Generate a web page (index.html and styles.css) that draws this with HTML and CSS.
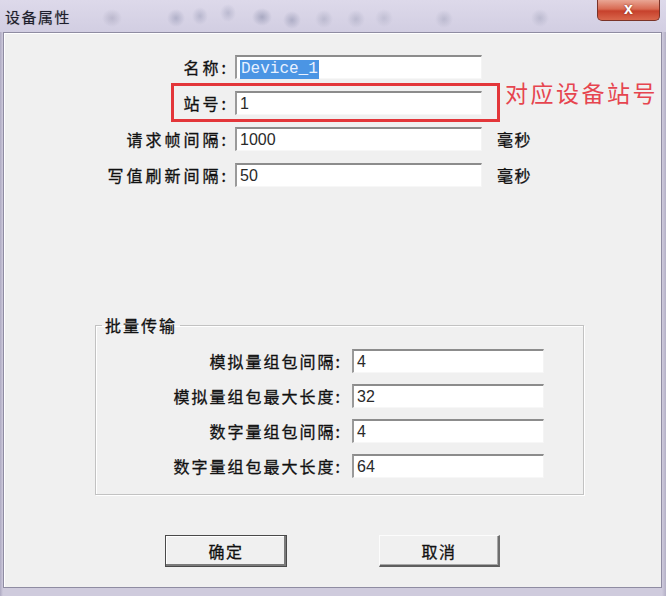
FILE: index.html
```html
<!DOCTYPE html>
<html lang="zh-CN">
<head>
  <meta charset="UTF-8">
  <title>设备属性</title>
  <link rel="stylesheet" href="styles.css">
</head>
<body>
  <div class="window">

    <!-- Title bar -->
    <div class="titlebar">
      <span class="title">设备属性</span>
      <div class="close">x</div>
    </div>

    <!-- Dialog body -->
    <div class="client">

      <div class="rows">
        <div class="row">
          <label class="label">名称:</label>
          <div class="field"><span class="sel">Device_1</span></div>
        </div>
        <div class="row marked">
          <label class="label">站号:</label>
          <div class="field">1</div>
          <div class="mark"></div>
          <div class="note">对应设备站号</div>
        </div>
        <div class="row">
          <label class="label">请求帧间隔:</label>
          <div class="field">1000</div>
          <span class="unit">毫秒</span>
        </div>
        <div class="row">
          <label class="label">写值刷新间隔:</label>
          <div class="field">50</div>
          <span class="unit">毫秒</span>
        </div>
      </div>

      <fieldset class="group">
        <legend>批量传输</legend>
        <div class="row">
          <label class="label">模拟量组包间隔:</label>
          <div class="field">4</div>
        </div>
        <div class="row">
          <label class="label">模拟量组包最大长度:</label>
          <div class="field">32</div>
        </div>
        <div class="row">
          <label class="label">数字量组包间隔:</label>
          <div class="field">4</div>
        </div>
        <div class="row">
          <label class="label">数字量组包最大长度:</label>
          <div class="field">64</div>
        </div>
      </fieldset>

      <div class="buttons">
        <button class="btn btn-default">确定</button>
        <button class="btn btn-plain">取消</button>
      </div>

    </div>
  </div>
</body>
</html>
```

FILE: styles.css
```css
/* Reset */
* {
  margin: 0;
  padding: 0;
  box-sizing: border-box;
}

body {
  width: 666px;
  height: 596px;
  overflow: hidden;
  font-family: "Noto Sans CJK SC", "Liberation Sans", sans-serif;
  background: #c4c0d4;
}

/* Window frame */
.window {
  width: 666px;
  height: 596px;
  display: flex;
  flex-direction: column;
  padding: 0 4px 8px 3px;
  background: linear-gradient(90deg, #aeaac2 0, #cfcbdd 3px, #cfcbdd 662px, #b4b0c6 666px);
}

/* Title bar, with the blurred glass behind it */
.titlebar {
  height: 32px;
  display: flex;
  align-items: center;
  margin: 0 -4px 0 -3px;
  padding-left: 5px;
  background:
    radial-gradient(ellipse 10px 9px at 112px 18px, rgba(90, 90, 120, 0.22), transparent),
    radial-gradient(ellipse 9px 9px at 176px 18px, rgba(70, 80, 120, 0.26), transparent),
    radial-gradient(ellipse 8px 9px at 200px 16px, rgba(70, 80, 120, 0.22), transparent),
    radial-gradient(ellipse 8px 9px at 228px 13px, rgba(70, 80, 120, 0.2), transparent),
    radial-gradient(ellipse 10px 9px at 262px 17px, rgba(60, 70, 110, 0.3), transparent),
    radial-gradient(ellipse 9px 9px at 292px 20px, rgba(60, 70, 110, 0.26), transparent),
    radial-gradient(ellipse 9px 9px at 324px 19px, rgba(80, 90, 120, 0.2), transparent),
    radial-gradient(ellipse 9px 9px at 356px 19px, rgba(80, 90, 120, 0.2), transparent),
    radial-gradient(ellipse 9px 9px at 384px 18px, rgba(80, 90, 120, 0.16), transparent),
    radial-gradient(ellipse 9px 9px at 444px 19px, rgba(80, 90, 120, 0.2), transparent),
    radial-gradient(ellipse 9px 9px at 540px 18px, rgba(80, 90, 120, 0.2), transparent),
    linear-gradient(180deg, #ddd9ea, #d2cee2);
}

.title {
  font-size: 15px;
  letter-spacing: 1.5px;
  color: #1e1e2c;
  text-shadow: 0 0 1px rgba(30, 30, 44, 0.4);
}

.close {
  margin-left: auto;
  margin-right: 6px;
  align-self: flex-start;
  width: 63px;
  height: 21px;
  border: 1px solid #7a3328;
  border-top: none;
  border-radius: 0 0 5px 5px;
  background: linear-gradient(180deg, #e9a694 0%, #d86a52 45%, #c7412c 55%, #d9674c 100%);
  color: #fff;
  font-family: "Liberation Sans", sans-serif;
  font-size: 16px;
  font-weight: bold;
  line-height: 18px;
  text-align: center;
  text-shadow: 0 0 2px #7a2a1a;
}

/* Client area */
.client {
  flex: 1;
  display: flex;
  flex-direction: column;
  padding-top: 22px;
  background: #f0f0f0;
  border: 1px solid #8f8ca2;
  box-shadow: inset 1px 1px 0 #fff;
}

.rows {
  display: flex;
  flex-direction: column;
  gap: 12px;
}

.row {
  display: flex;
  align-items: center;
  height: 24px;
}

.label {
  width: 225px;
  margin-right: 6px;
  text-align: right;
  font-size: 16px;
  letter-spacing: 3px;
  color: #111;
  -webkit-text-stroke: 0.3px #111;
  white-space: nowrap;
}

/* Sunken edit box */
.field {
  width: 247px;
  height: 24px;
  padding-left: 3px;
  background: #fff;
  border-top: 2px solid #8c8c8c;
  border-left: 2px solid #9a9a9a;
  border-right: 1px solid #f4f4f4;
  border-bottom: 1px solid #f7f7f7;
  font-family: "Liberation Sans", sans-serif;
  font-size: 16px;
  line-height: 21px;
  color: #2a2a2a;
}

.sel {
  display: inline-block;
  height: 19px;
  margin-top: 1px;
  padding: 0 1px;
  background: #4b95e4;
  color: #e8f1ff;
  font-family: "Liberation Mono", monospace;
  font-size: 16px;
  line-height: 19px;
}

.unit {
  margin-left: 15px;
  font-size: 16px;
  letter-spacing: 1.5px;
  color: #111;
  -webkit-text-stroke: 0.3px #111;
}

/* Red annotation over the station row */
.marked {
  position: relative;
}

.mark {
  position: absolute;
  left: 167px;
  top: -8px;
  width: 329px;
  height: 39px;
  border: 3px solid #e3363a;
}

.note {
  position: absolute;
  left: 501px;
  top: -13px;
  font-size: 23px;
  line-height: 28px;
  letter-spacing: 2.5px;
  color: #e6454f;
  white-space: nowrap;
}

/* Group box */
.group {
  margin: 129px 0 0 91px;
  width: 489px;
  padding: 15px 0 16px 0;
  border: 1px solid #c2c2c2;
  box-shadow: 1px 1px 0 #fff, inset 1px 1px 0 #fff;
  display: flex;
  flex-direction: column;
  gap: 11px;
}

.group legend {
  margin-left: 6px;
  padding: 0 3px;
  font-size: 16px;
  line-height: 18px;
  letter-spacing: 2px;
  color: #111;
  -webkit-text-stroke: 0.3px #111;
}

.group .label {
  width: 246px;
  margin-right: 10px;
  letter-spacing: 2px;
}

.group .field {
  width: 192px;
}

/* Buttons */
.buttons {
  display: flex;
  margin-top: 40px;
}

.btn {
  height: 32px;
  background: #f0f0f0;
  font-family: "Noto Sans CJK SC", sans-serif;
  font-size: 16px;
  letter-spacing: 1.5px;
  color: #111;
  -webkit-text-stroke: 0.3px #111;
}

.btn-default {
  width: 122px;
  margin-left: 161px;
  border: 1px solid #4a4a4a;
  box-shadow: inset -2px -2px 0 #7a7a7a, inset 1px 1px 0 #fff;
}

.btn-plain {
  width: 121px;
  margin-left: 92px;
  border-top: 1px solid #fcfcfc;
  border-left: 1px solid #fcfcfc;
  border-right: 2px solid #6e6e6e;
  border-bottom: 2px solid #5e5e5e;
  box-shadow: inset -1px -1px 0 #a8a8a8;
}
```
